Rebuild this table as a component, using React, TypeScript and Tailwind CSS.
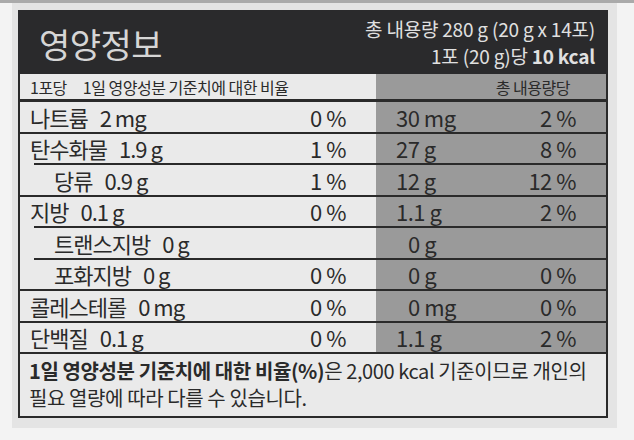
import React from 'react';

const font = { fontFamily: '"Noto Sans CJK KR", "Noto Sans", sans-serif' };

type Row = {
  name: string;
  amt: string;
  pct: string;
  tAmt: string;
  tPct: string;
  indent?: boolean;
  zero?: boolean;
};

const rows: Row[] = [
  { name: '나트륨', amt: '2 mg', pct: '0 %', tAmt: '30 mg', tPct: '2 %' },
  { name: '탄수화물', amt: '1.9 g', pct: '1 %', tAmt: '27 g', tPct: '8 %' },
  { name: '당류', amt: '0.9 g', pct: '1 %', tAmt: '12 g', tPct: '12 %', indent: true },
  { name: '지방', amt: '0.1 g', pct: '0 %', tAmt: '1.1 g', tPct: '2 %' },
  { name: '트랜스지방', amt: '0 g', pct: '', tAmt: '0 g', tPct: '', indent: true, zero: true },
  { name: '포화지방', amt: '0 g', pct: '0 %', tAmt: '0 g', tPct: '0 %', indent: true, zero: true },
  { name: '콜레스테롤', amt: '0 mg', pct: '0 %', tAmt: '0 mg', tPct: '0 %', zero: true },
  { name: '단백질', amt: '0.1 g', pct: '0 %', tAmt: '1.1 g', tPct: '2 %' },
];

function NutrientRow({ r }: { r: Row }) {
  return (
    <div className="flex h-[31.5px] text-[22px] leading-none text-[#2a2a2a]">
      {/* left: per packet */}
      <div className={`w-[356px] ${r.indent ? 'pl-[14px]' : ''}`}>
        <div
          className={`h-full border-t-2 border-[#2a2a2a] flex items-center justify-between pr-[30px] ${
            r.indent ? 'pl-[20px]' : 'pl-[10px]'
          }`}
        >
          <span className="whitespace-nowrap tracking-[-1px]">
            {r.name}
            <span className="ml-[12px]">{r.amt}</span>
          </span>
          <span className="tracking-[-0.5px]">{r.pct}</span>
        </div>
      </div>
      {/* right: total */}
      <div className="flex-1 bg-[#9a9a9a] border-t-2 border-[#2a2a2a] flex items-center justify-between pr-[30px] tracking-[-0.5px]">
        <span className={r.zero ? 'pl-[32px]' : 'pl-[20px]'}>{r.tAmt}</span>
        <span>{r.tPct}</span>
      </div>
    </div>
  );
}

export default function App() {
  return (
    <div className="w-[634px] h-[440px] bg-[#f3f3f3] overflow-hidden" style={font}>
      <div className="h-[3px] bg-[#aaaaaa]" />
      <div className="ml-[12px] w-[605px] h-[425px] bg-[#e4e4e4] pt-[7px] pl-[6px]">
        <div className="w-[590px]">
          {/* dark header */}
          <div className="h-[64px] bg-[#2a2a2c] flex items-center justify-between pl-[21px] pr-[13px]">
            <span className="text-[34px] text-[#d6d6d6] mt-[2px] tracking-[-0.5px]">영양정보</span>
            <div className="flex flex-col items-end text-[19px] leading-[27px] text-[#e0e0e0] tracking-[-0.2px]">
              <div>총 내용량 280 g (20 g x 14포)</div>
              <div>
                1포 (20 g)당 <span className="font-bold">10 kcal</span>
              </div>
            </div>
          </div>

          {/* bordered table */}
          <div className="border-x-2 border-b-2 border-[#2a2a2a] bg-[#eaeaea]">
            <div className="flex h-[28px] border-b-[3px] border-[#2a2a2a] text-[16px] text-[#2a2a2a] tracking-[-0.5px]">
              <div className="w-[356px] flex items-center pl-[10px]">
                <span>1포당</span>
                <span className="ml-[16px]">1일 영양성분 기준치에 대한 비율</span>
              </div>
              <div className="flex-1 bg-[#9a9a9a] flex items-center justify-end pr-[36px]">
                총 내용량당
              </div>
            </div>

            <div className="-mt-[2px]">
              {rows.map((r) => (
                <NutrientRow key={r.name} r={r} />
              ))}
            </div>

            <div className="border-t-2 border-[#2a2a2a] px-[9px] pt-[3px] pb-[5px] text-[20px] leading-[27px] text-[#2a2a2a]">
              <div className="whitespace-nowrap tracking-[-0.4px]">
                <span className="font-bold">1일 영양성분 기준치에 대한 비율(%)</span>은 2,000 kcal 기준이므로 개인의
              </div>
              <div className="whitespace-nowrap tracking-[-0.4px]">필요 열량에 따라 다를 수 있습니다.</div>
            </div>
          </div>
        </div>
      </div>
    </div>
  );
}
